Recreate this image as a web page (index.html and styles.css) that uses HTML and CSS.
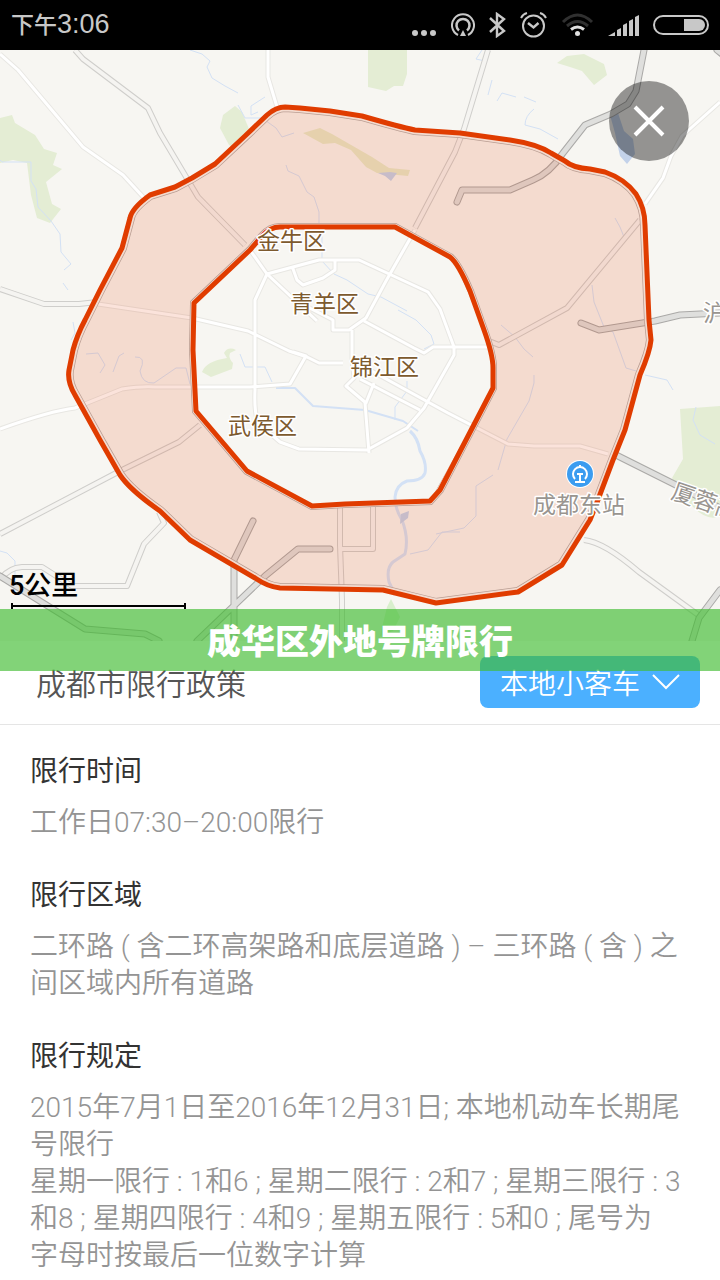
FILE: index.html
```
<!DOCTYPE html>
<html lang="zh-CN">
<head>
    <meta charset="UTF-8">
    <meta name="viewport" content="width=device-width, initial-scale=1.0">
    <title>成华区外地号牌限行</title>
    <link rel="stylesheet" href="styles.css">
</head>
<body>
    <header class="status-bar">
        <div class="time"><span class="period">下午</span>3:06</div>
        <div class="status-icons">
            <svg width="25" height="26" viewBox="414 12 25 26" fill="#c8c8c8">
                <circle cx="417" cy="33" r="3"/><circle cx="426" cy="33" r="3"/><circle cx="435" cy="33" r="3"/>
            </svg>
            <svg width="24" height="26" viewBox="452 12 24 26" fill="none" stroke="#c8c8c8" stroke-width="2">
                <path d="M459 35a11 11 0 1 1 10 0"/>
                <path d="M460 30.500a6.500 6.500 0 1 1 8 0" stroke-width="2.500"/>
                <path d="M464 30l3 6h-6z" fill="#c8c8c8" stroke="none"/>
            </svg>
            <svg width="17" height="26" viewBox="490 12 17 26" fill="none" stroke="#c8c8c8" stroke-width="2.400">
                <path d="M491 18l14 13-7 5V14l7 5-14 13"/>
            </svg>
            <svg width="27" height="26" viewBox="521 12 27 26" fill="none" stroke="#c8c8c8" stroke-width="2">
                <circle cx="534.500" cy="26" r="10.500"/>
                <path d="M529 23l5.500 4.500 5-4.500" stroke-width="2.400"/>
                <path d="M522 18q2-4 6-5M547 18q-2-4-6-5"/>
            </svg>
            <svg width="33" height="26" viewBox="563 12 33 26" fill="none" stroke-width="3">
                <path d="M565 22q14.500-14 29 0M569 26q10.500-9 21 0" stroke="#303030"/>
                <path d="M573 29.500q6.500-5 13 0" stroke="#e0e0e0"/>
                <circle cx="579.500" cy="33.500" r="2.500" fill="#e0e0e0"/>
            </svg>
            <svg width="31" height="26" viewBox="610 12 31 26" fill="#c8c8c8">
                <path d="M610 36l7-4v4zM619 30l4-2v8h-4zM625 25l4-2v13h-4zM631 21l4-2v17h-4zM637 17l4-2v21h-4z"/>
            </svg>
            <svg width="56" height="26" viewBox="653 12 56 26">
                <rect x="654" y="16" width="54" height="18" rx="9" fill="none" stroke="#c8c8c8" stroke-width="2"/>
                <path d="M684 19h15a6 6 0 0 1 0 12h-15z" fill="#c8c8c8"/>
            </svg>
        </div>
    </header>

    <section class="map">
        <svg class="map-canvas" viewBox="0 50 720 591" role="img" aria-label="成都限行区域地图">
            <defs>
                <path id="outer" d="M85 320L100 290 122 248 130 218Q132 208 150 195L175 187 192 178 215 164 245 136 267 115Q276 107 285 107L300 108 330 111 362 116Q400 127 415 130L460 133 510 140Q537 144 551 153L565 161Q573 168 590 169L605 172Q625 179 636 194 645 208 645 225L649 320 651 340Q650 352 640 375L625 430 613 460 596 505 590 520 562 565 518 592 436 603 383 590 280 588Q268 587 255 578L190 540 160 511Q130 490 120 475L100 440 75 395Q67 382 69 370L73 350Q77 335 85 320z"/>
                <path id="inner" d="M194 303L250 250 262 236Q270 227 280 227H395L450 257Q458 263 470 291L484 330Q493 355 493 368V388L440 490 430 501 345 504 312 506 247 471 196 411 193 350z"/>
                <path id="streets" d="M0 54l18 16 65 77 40 28 22 24M268 50v27l9 30M0 429q50-18 75-21l47-19q20-3 33-2h95l40-3 16-28-13-4M98 304l94 14 56 13 41 20 18 6 12 6h24M250 250l17 24 50 47M255 385V300l12-26 52-14h40l69 32 12 17 14 38v8l-30 53-17 20-40 22-68-1-19-7-22-19q-4-12-3-33V300M415 230l-29 51-20 37-17 12h-16v-10l-41-21M292 266l5 14 6 5 20-7 12-8v-10M352 330v28l2 20-8 8 20 17 8-20M364 321l50 27 10 5 9-6h60M368 369l80 44 60 31 26 2h46l28 8M360 379l60 31M365 403l4 50M720 102l-38 34-11 20-8 22-18 26"/>
                <path id="roads" d="M75 50l8 9 65 49 12 25 38 64 47 48M0 289l44 15h35l18-2M488 50l-24 79-9 23-40 76M640 220l-73 88-68 37-10-4M0 534l120-63 59-29 21-17M0 580q8-12 22-13h20l30 19h55l17-42 20-21-5-11M340 507v38l2 55v41M373 507v42h-31M584 540q20 2 55 32l62 45"/>
                <path id="highways" d="M0 576l35 22 50 31 60 5 14 7M234 641v-81l19-39M197 641l68-65 33-27h32M644 50l-8 41-8 13-17 10-26 11-22 28q-13 20-30 27l-23 10h-48l-5 12M720 313l-40 2-25 6-56 9-18-7M616 455l66 33 38 20M720 590l-21 28-7 23M717 50l10 8"/>
                <clipPath id="band">
                    <path clip-rule="evenodd" d="M85 320L100 290 122 248 130 218 150 195 192 178 215 164 245 136 270 112 285 107 362 116 415 130 510 140 551 153 577 167 605 172 636 194 645 225 651 340 625 430 590 520 562 565 518 592 436 603 383 590 280 588 255 578 190 540 125 482 75 395 69 370z M194 303L262 236 275 227H395L455 262 484 330 493 365V388L430 501 312 506 247 471 196 411 193 350z"/>
                </clipPath>
            </defs>
            <rect y="50" width="720" height="591" fill="#f7f6f2"/>

            <!-- parks -->
            <g fill="#e4edd4">
                <path d="M0 118l12-3 3 8 20 12 9 14 13 4-4 12 9 4-16 13 6 22 9 5-11 14-13-5-6-23-4-32-14-3-13 3z"/>
                <path d="M235 106l-12 9-3 13 9 17 8 4 12-20-7-17z"/>
                <path d="M368 50h39v24l-4 12-9 0-8 5-18-4z"/>
                <path d="M557 63l10-7 17-2 20 10 3 11-13 10-12-14-12-4z"/>
                <path d="M303 133l17-5 12 6 40 23 17 11 21 2-2 6-31-3-11-6-15-17-16-7-12 1z" fill="#e7ebca"/>
                <path d="M202 372q4-11 25-14l-3-5q4-7 12-3l-6 3q-2 5 3 10l-1 6-21 8z"/>
                <path d="M680 409l40-3v110q-20 10-48-38l11-19z"/>
                <path d="M387 607l4-8 9 18-7 14-13 5z" fill="#d8efcc"/>
            </g>

            <!-- rivers and ponds -->
            <g fill="none" stroke="#d3e1f5" stroke-width="1">
                <path d="M190 50l12 4 8 7-3 6 5 11 13 8 13 7M265 97l-14 9v9l7-3M238 105l7 13h17l14 10 6 9 12-4M0 160l2 2h29v19l5 8 2 18 13 14 9 13 1 18 10 12-7 6M63 283l5 7"/>
                <path d="M286 165l2 6 11 5 8 16 7 5 5 15v17l3 8v24l12 13 13 6 21 14 13 3 26 14M398 310l18 10 15 15 3 9-10 5"/>
                <path d="M482 50l-6 9 9 2M492 80l-4 15M497 101l5-8 14 4M524 97l12 5M534 109q-9 7-9 16l15 4 18 10M73 322l2 11-4 7M86 354l12-1 7 12-5 8M113 372l6-16 5-3M135 357q12-1 5 14 2 13 14 12l22-15h10l4 16M240 354l5 13h20l7 15"/>
                <path d="M0 551l7 2 8 8v33M615 218l5 9 4 10M592 285l2 17 10 25 9 5 13 36 10 3M645 375l22 5 6 10M696 407l-3 13 7 15 15 9M501 325l14 12 9 12 9 8M534 375v8l-5 18-22 38-9 31M493 475l-17 11v30l-12 12-28 6"/>
            </g>
            <g fill="none" stroke="#d3e1f5" stroke-linejoin="round">
                <path d="M276 388h19l18 18 52 4 38 11 15 10" stroke-width="2"/>
                <path d="M410 431q8 7 10 20 7 12 5 22-3 8-18 8-11 4-12 16 0 12 7 23 7 18 3 34l-12 8q-7 6-4 20l6 13" stroke-width="3"/>
                <path d="M395 420v-13l12-16v-10M410 554l18-4 14-18h18"/>
            </g>
            <path d="M610 115l5 18 5 23 7 8 8-10-2-15-9-8-6-18zM378 173l12-1 7 1-6 8-6-5zM401 514l8-3-1 7-8 6z" fill="#c3d2ea"/>

            <g fill="none" stroke-linejoin="round">
                <use href="#streets" stroke="#e8e7e3" stroke-width="5"/>
                <use href="#streets" stroke="#fff" stroke-width="3"/>
                <use href="#roads" stroke="#cfcecb" stroke-width="6"/>
                <use href="#roads" stroke="#f5f4f1" stroke-width="4"/>
                <use href="#highways" stroke="#aaa9a7" stroke-width="7" stroke-linecap="round"/>
                <use href="#highways" stroke="#dfdfdd" stroke-width="5" stroke-linecap="round"/>
            </g>

            <!-- restricted zone between the two ring roads -->
            <g clip-path="url(#band)" fill="none">
                <use href="#outer" stroke="#b3aeaa" stroke-width="10"/>
                <use href="#outer" stroke="#f7f6f2" stroke-width="8.500"/>
                <use href="#inner" stroke="#b3aeaa" stroke-width="8"/>
                <use href="#inner" stroke="#f7f6f2" stroke-width="6.500"/>
                <rect y="50" width="720" height="591" fill="#e03c00" fill-opacity=".14"/>
            </g>
            <g fill="none" stroke="#e03c00" stroke-width="5" stroke-linejoin="round">
                <use href="#outer"/>
                <use href="#inner"/>
            </g>

            <g class="district">
                <text x="257" y="249">金牛区</text>
                <text x="290" y="312">青羊区</text>
                <text x="350" y="375">锦江区</text>
                <text x="228" y="434">武侯区</text>
            </g>
            <g class="place">
                <text x="533" y="513">成都东站</text>
                <text x="703" y="321">沪</text>
                <text x="670" y="498" transform="rotate(19 670 498)">厦蓉高</text>
            </g>
            <circle cx="580" cy="474" r="14" fill="#fff"/>
            <circle cx="580" cy="474" r="13" fill="#3b9cf0"/>
            <path d="M575 479a7 7 0 1 1 10 0M580 467v-2M577 474h6M580 474v7M575 482h10" fill="none" stroke="#fff" stroke-width="2"/>

            <text class="scale-label" x="9" y="595">5公里</text>
            <path d="M12 603v6M185 603v6M12 606h173" fill="none" stroke="#000" stroke-width="2"/>
        </svg>
        <button class="close" type="button" aria-label="关闭">
            <svg width="32" height="32" viewBox="0 0 32 32" fill="none" stroke="#fff" stroke-width="4">
                <path d="M2 2l28 28M30 2L2 30"/>
            </svg>
        </button>
        <h1 class="banner">成华区外地号牌限行</h1>
    </section>

    <div class="policy-bar">
        <label for="vehicle">成都市限行政策</label>
        <div class="picker">
            <select id="vehicle">
                <option>本地小客车</option>
                <option>外地小客车</option>
            </select>
            <svg class="chevron" width="28" height="16" viewBox="0 0 28 16" fill="none" stroke="#fff" stroke-width="2">
                <path d="M1 1l13 13L27 1"/>
            </svg>
        </div>
    </div>

    <main class="rules">
        <section>
            <h2>限行时间</h2>
            <p>工作日07:30–20:00限行</p>
        </section>
        <section>
            <h2>限行区域</h2>
            <p>二环路 ( 含二环高架路和底层道路 ) – 三环路 ( 含 ) 之间区域内所有道路</p>
        </section>
        <section>
            <h2>限行规定</h2>
            <p>2015年7月1日至2016年12月31日; 本地机动车长期尾号限行<br>
            星期一限行 : 1和6 ; 星期二限行 : 2和7 ; 星期三限行 : 3和8 ; 星期四限行 : 4和9 ; 星期五限行 : 5和0 ; 尾号为<span class="keep">字母时</span>按最后一位数字计算</p>
        </section>
    </main>
</body>
</html>
```

FILE: styles.css
```
* {
    box-sizing: border-box;
}
body {
    margin: 0;
    background-color: #fff;
    font-family: "Noto Sans CJK SC", sans-serif;
    font-size: 28px;
    line-height: 37px;
    color: #949494;
}
h1, h2, p {
    margin: 0;
}
.status-bar {
    display: flex;
    align-items: center;
    justify-content: space-between;
    height: 50px;
    padding: 0 11px;
    background-color: #000;
}
.time {
    font-family: "Liberation Sans", "Noto Sans CJK SC", sans-serif;
    font-size: 27px;
    color: #c8c8c8;
}
.period {
    font-size: 23px;
    font-weight: 500;
}
.status-icons {
    display: flex;
    gap: 14px;
}
.map {
    position: relative;
}
.map-canvas {
    display: block;
    width: 100%;
    height: auto;
}
.map-canvas text {
    font-size: 23px;
    paint-order: stroke;
    stroke: #fff;
    stroke-width: 3px;
    stroke-linejoin: round;
}
.district {
    fill: #7d5a2e;
}
.place {
    fill: #999590;
}
.map-canvas .scale-label {
    font-family: Roboto, "Noto Sans CJK SC", sans-serif;
    font-size: 27px;
    font-weight: 500;
    stroke: none;
}
.close {
    position: absolute;
    top: 31px;
    right: 31px;
    display: flex;
    align-items: center;
    justify-content: center;
    width: 80px;
    height: 80px;
    padding: 0;
    border: none;
    border-radius: 50%;
    background-color: rgba(0, 0, 0, 0.4);
}
.banner {
    position: absolute;
    left: 0;
    right: 0;
    bottom: -30px;
    z-index: 1;
    background-color: rgba(66, 188, 50, 0.66);
    font-size: 34px;
    font-weight: 900;
    line-height: 62px;
    text-align: center;
    color: #fff;
}
.policy-bar {
    display: flex;
    align-items: center;
    justify-content: space-between;
    padding: 15px 20px 16px 36px;
    border-bottom: 1px solid #e5e5e5;
    font-size: 30px;
    font-weight: 350;
    color: #555;
}
.picker {
    position: relative;
}
.picker select {
    appearance: none;
    display: block;
    width: 220px;
    height: 52px;
    padding: 0 20px;
    border: none;
    border-radius: 8px;
    background-color: #4bb0ff;
    font-family: inherit;
    font-size: 28px;
    font-weight: 350;
    color: #fff;
}
.chevron {
    position: absolute;
    top: 18px;
    right: 20px;
    pointer-events: none;
}
.rules {
    display: flex;
    flex-direction: column;
    gap: 34px;
    padding: 26px 30px;
}
.rules h2 {
    margin-bottom: 16px;
    font-size: 28px;
    font-weight: 400;
    color: #333;
}
.rules p {
    font-family: Roboto, "Noto Sans CJK SC", sans-serif;
    font-weight: 350;
}
.keep {
    white-space: nowrap;
}
```
